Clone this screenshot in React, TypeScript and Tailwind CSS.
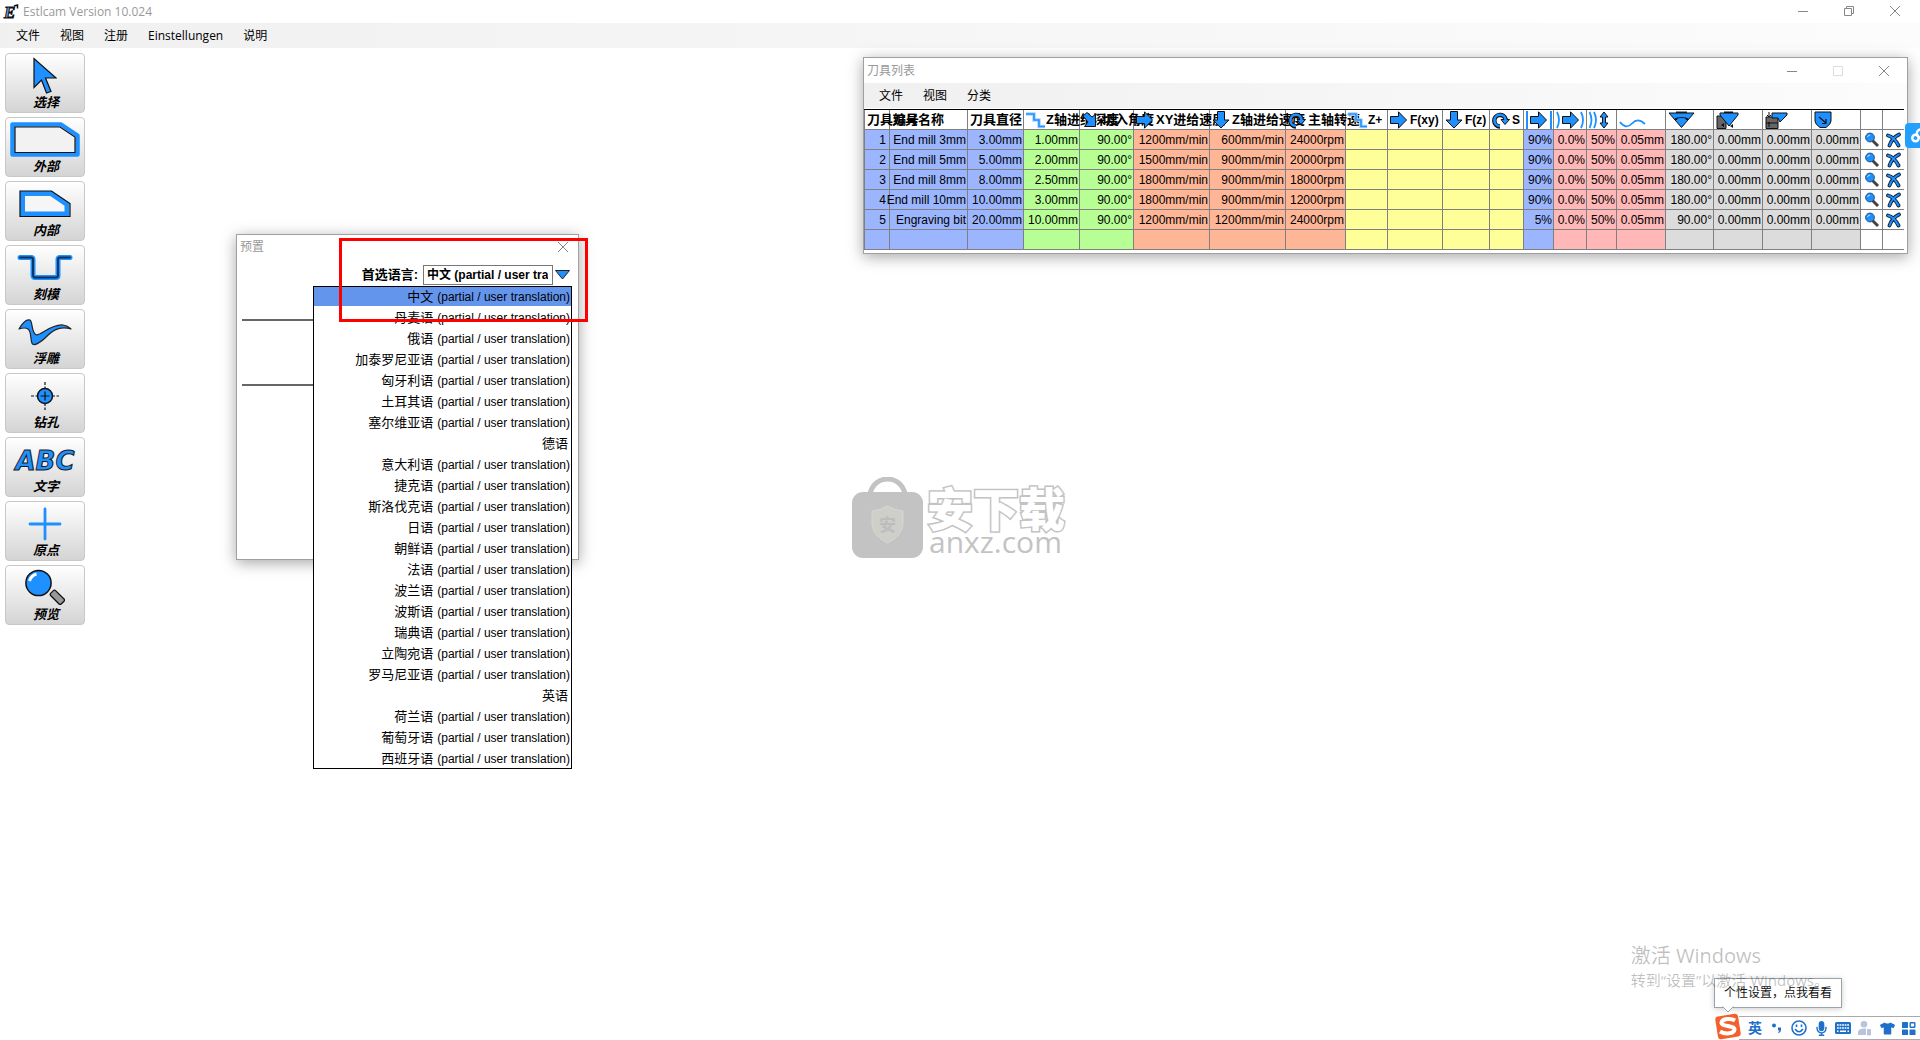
import React from "react";
import { FaMicrophone, FaTshirt } from "react-icons/fa";

const BLUE = "#1e90ff";

/* ---------- toolbar drawings ---------- */

const CursorIcon = () => (
  <svg width="24" height="38" viewBox="0 0 24 38" aria-hidden="true">
    <path d="M1 1.5V30.5L8.5 23L13.5 36L18 34.5L12.5 21H23Z" fill={BLUE} stroke="#111" strokeWidth="1.2" />
  </svg>
);

const OutsideIcon = () => (
  <svg width="70" height="36" viewBox="0 0 70 36" aria-hidden="true">
    <path d="M2.5 2.5H51L67.5 13.5V32.5H2.5Z" fill="none" stroke={BLUE} strokeWidth="4.5" strokeLinejoin="round" />
    <path d="M5 5H50L65 15V30.5H5Z" fill="#f2f2f2" stroke="#111" strokeWidth="1.2" />
  </svg>
);

const InsideIcon = () => (
  <svg width="52" height="28" viewBox="0 0 52 28" aria-hidden="true">
    <path d="M3.5 3.5H32L48 14.5V24H3.5Z" fill="#f6f6f6" stroke={BLUE} strokeWidth="5" />
    <path d="M1 1H32.5L51 13.5V26.5H1Z" fill="none" stroke="#111" strokeWidth="1.2" />
  </svg>
);

const EngraveIcon = () => (
  <svg width="56" height="28" viewBox="0 0 56 28" fill="none" aria-hidden="true">
    <path d="M3 3.5H14Q16 3.5 16 5.5V21Q16 23.5 18 23.5H39Q41 23.5 41 21.5V5.5Q41 3.5 43 3.5H53" stroke={BLUE} strokeWidth="5" strokeLinecap="round" />
    <path d="M3 3.5H14Q16 3.5 16 5.5V21Q16 23.5 18 23.5H39Q41 23.5 41 21.5V5.5Q41 3.5 43 3.5H53" stroke="#0d2f57" strokeWidth="1.8" strokeLinecap="round" />
  </svg>
);

const ReliefIcon = () => (
  <svg width="54" height="28" viewBox="0 0 54 28" aria-hidden="true">
    <path d="M1 11C5 4 9 1 12 2C15 4 13 15 18.500 17C24 17 33 6 45 7C49 7.5 51 9 53 11C40 7 33 14 26 21C21 25 17 28 14.500 26C12 23 14 14 10 11C7 9 4 10 1 11Z" fill={BLUE} stroke="#222" strokeWidth="1.2" strokeLinejoin="round" />
  </svg>
);

const DrillIcon = () => (
  <svg width="30" height="30" viewBox="0 0 30 30" aria-hidden="true">
    <circle cx="15" cy="15" r="7.5" fill={BLUE} stroke="#111" strokeWidth="1.5" />
    <path d="M15 10.5V19.5M10.5 15H19.5" stroke="#111" strokeWidth="1.2" />
    <path d="M1 15H4M5.5 15H7M23 15H25M26.5 15H29M15 1V4M15 5.5V7M15 23V25M15 26.5V29" stroke="#111" strokeWidth="1.2" />
  </svg>
);

const OriginIcon = () => (
  <svg width="34" height="34" viewBox="0 0 34 34" aria-hidden="true">
    <path d="M17 2V32M2 17H32" stroke={BLUE} strokeWidth="2.8" strokeLinecap="round" />
  </svg>
);

const PreviewIcon = () => (
  <svg width="40" height="38" viewBox="0 0 40 38" aria-hidden="true">
    <rect x="-3.5" y="0" width="7" height="15" rx="1.5" transform="translate(27 23) rotate(-45)" fill="#999" stroke="#111" strokeWidth="1.3" />
    <circle cx="13.5" cy="14" r="12.6" fill={BLUE} stroke="#111" strokeWidth="1.5" />
    <path d="M4.5 12C5.5 8.500 8 6 11.5 5" stroke="#fff" strokeWidth="3" fill="none" />
  </svg>
);

const TextIcon = () => (
  <span
    aria-hidden="true"
    className="pt-0.5 font-['DejaVu_Sans'] text-[26px] leading-none font-bold italic text-[#1e90ff] [-webkit-text-stroke:1px_#1a1a1a]"
  >
    ABC
  </span>
);

const tools: { label: string; icon: React.ReactNode }[] = [
  { label: "选择", icon: <CursorIcon /> },
  { label: "外部", icon: <OutsideIcon /> },
  { label: "内部", icon: <InsideIcon /> },
  { label: "刻模", icon: <EngraveIcon /> },
  { label: "浮雕", icon: <ReliefIcon /> },
  { label: "钻孔", icon: <DrillIcon /> },
  { label: "文字", icon: <TextIcon /> },
  { label: "原点", icon: <OriginIcon /> },
  { label: "预览", icon: <PreviewIcon /> },
];

/* ---------- tool table drawings ---------- */

const HIcon = ({ w = 20, children }: { w?: number; children: React.ReactNode }) => (
  <svg width={w} height="18" viewBox={`0 0 ${w} 18`} className="shrink-0" fill="none" aria-hidden="true">
    {children}
  </svg>
);

const arrowPath = "M0.5 5.5H8.5V0.8L16.5 9L8.5 17.2V12.5H0.5Z";

const Stairs = () => (
  <HIcon>
    <path d="M0 3H8V9H13V15.5H19" stroke="#a8d4ff" strokeWidth="3.5" />
    <path d="M0 3H8V9H13V15.5H19" stroke={BLUE} strokeWidth="1.6" />
  </HIcon>
);
const ArrowRight = () => (
  <HIcon>
    <path d={arrowPath} fill={BLUE} stroke="#111" />
  </HIcon>
);
const ArrowDown = () => (
  <HIcon>
    <path d="M5.5 0.5H12.5V9H17L9 17L1 9H5.5Z" fill={BLUE} stroke="#111" />
  </HIcon>
);
const ArrowDiagonal = () => (
  <HIcon>
    <path d="M1 5L5 1.5L10 6L13.5 3.5V15.5H2.5L6 11Z" fill={BLUE} stroke="#111" />
  </HIcon>
);
const Spindle = () => (
  <HIcon>
    <path d="M8 15.5A5.8 5.8 0 1 1 13.8 8.5" stroke="#111" strokeWidth="4.5" />
    <path d="M9 8.5H17.5L13 13.5Z" fill={BLUE} stroke="#111" />
    <path d="M8 15A5.6 5.6 0 1 1 13.6 9" stroke={BLUE} strokeWidth="2.6" />
  </HIcon>
);
const BarsArrow = () => (
  <HIcon w={27}>
    <path d="M1 0V18M25 0V18" stroke={BLUE} strokeWidth="2" />
    <path d={arrowPath} fill={BLUE} stroke="#111" transform="translate(4 0)" />
  </HIcon>
);
const CurvesArrow = () => (
  <HIcon w={29}>
    <path d="M1 1Q5 9 1 17M25 1Q29 9 25 17" stroke={BLUE} strokeWidth="1.8" />
    <path d={arrowPath} fill={BLUE} stroke="#111" transform="translate(6 0)" />
  </HIcon>
);
const CurvesUpDown = () => (
  <HIcon w={22}>
    <path d="M0.5 1Q4.5 9 0.5 17M5 1Q9 9 5 17" stroke={BLUE} strokeWidth="1.8" />
    <path d="M15 1L19 6H16.5V12H19L15 17L11 12H13.5V6H11Z" fill={BLUE} stroke="#111" />
  </HIcon>
);
const Wave = () => (
  <HIcon w={27}>
    <path d="M1 11Q7 19 13 12.5Q19 6 26 13" stroke={BLUE} strokeWidth="1.8" />
  </HIcon>
);
const TipAngle = () => (
  <HIcon w={27}>
    <path d="M8 0.5H19V3H8Z" fill="#222" />
    <path d="M1 2H26L13.5 16.5Z" fill={BLUE} stroke="#111" />
    <path d="M7 8Q13.5 5 20 8" stroke="#111" strokeWidth="1.2" />
    <path d="M6 9L10 6L9 9ZM21 9L17 6L18 9Z" fill="#111" />
  </HIcon>
);
const TipOffset = () => (
  <HIcon w={24}>
    <path d="M1 5H7L10 9V17.5H1Z" fill="#666" stroke="#111" />
    <path d="M4 2H22V4L13 15L4 4Z" fill={BLUE} stroke="#111" />
    <path d="M8 0.5H17V2H8ZM5 14L8 12V16ZM17 13L14 15L17 17Z" fill="#111" />
  </HIcon>
);
const TipDepth = () => (
  <HIcon w={24}>
    <path d="M1 6H13V17.5H1Z" fill="#666" stroke="#111" />
    <path d="M4 1V6M2 4L4 6L6 4" stroke="#111" />
    <path d="M7 2H22V4L15 11L13 7H7Z" fill={BLUE} stroke="#111" />
    <path d="M4 16V11M3 12L5 12M1 12H13" stroke="#111" />
  </HIcon>
);
const TipRadius = () => (
  <HIcon w={20}>
    <path d="M1 1H17V10Q17 13 12 16.5H6Q1 13 1 10Z" fill={BLUE} stroke="#111" />
    <path d="M5 6L12 12M12 8V12.5H8" stroke="#111" strokeWidth="1.2" />
  </HIcon>
);

const LensIcon = () => (
  <svg width="16" height="16" viewBox="0 0 16 16" aria-hidden="true">
    <path d="M8.5 8.5L14 14" stroke="#444" strokeWidth="3" />
    <circle cx="6" cy="5.5" r="4.4" fill={BLUE} stroke="#24507f" />
    <path d="M3.5 5Q4 3.3 6 3" stroke="#cfe6ff" fill="none" />
  </svg>
);
const CrossIcon = () => (
  <svg width="16" height="16" viewBox="0 0 16 16" fill="none" aria-hidden="true">
    <path d="M2 3.5Q8 5 12.5 13.5M13 2.5Q6 6 3.5 13.5" stroke="#123" strokeWidth="3.8" strokeLinecap="round" />
    <path d="M2 3.5Q8 5 12.5 13.5M13 2.5Q6 6 3.5 13.5" stroke={BLUE} strokeWidth="1.9" strokeLinecap="round" />
  </svg>
);

type Column = { width: string; fill: string; title?: string; small?: boolean; icon?: React.ReactNode; name: string };

const columns: Column[] = [
  { width: "w-[25px]", fill: "bg-[#9bb6ff]", title: "刀具编号", name: "刀具编号" },
  { width: "w-[78px]", fill: "bg-[#9bb6ff]", title: "刀具名称", name: "刀具名称" },
  { width: "w-[56px]", fill: "bg-[#9bb6ff]", title: "刀具直径", name: "刀具直径" },
  { width: "w-[56px]", fill: "bg-[#b7ff95]", title: "Z轴进给深度", icon: <Stairs />, name: "Z轴进给深度" },
  { width: "w-[54px]", fill: "bg-[#b7ff95]", title: "切入角度", icon: <ArrowDiagonal />, name: "切入角度" },
  { width: "w-[76px]", fill: "bg-[#ffb697]", title: "XY进给速度", icon: <ArrowRight />, name: "XY进给速度" },
  { width: "w-[76px]", fill: "bg-[#ffb697]", title: "Z轴进给速度", icon: <ArrowDown />, name: "Z轴进给速度" },
  { width: "w-[60px]", fill: "bg-[#ffb697]", title: "主轴转速", icon: <Spindle />, name: "主轴转速" },
  { width: "w-[42px]", fill: "bg-[#ffff99]", title: "Z+", small: true, icon: <Stairs />, name: "Z+" },
  { width: "w-[55px]", fill: "bg-[#ffff99]", title: "F(xy)", small: true, icon: <ArrowRight />, name: "F(xy)" },
  { width: "w-[47px]", fill: "bg-[#ffff99]", title: "F(z)", small: true, icon: <ArrowDown />, name: "F(z)" },
  { width: "w-[34px]", fill: "bg-[#ffff99]", title: "S", small: true, icon: <Spindle />, name: "S" },
  { width: "w-[30px]", fill: "bg-[#9bb6ff]", icon: <BarsArrow />, name: "stepover" },
  { width: "w-[33px]", fill: "bg-[#ffb7b7]", icon: <CurvesArrow />, name: "trochoidal step" },
  { width: "w-[30px]", fill: "bg-[#ffb7b7]", icon: <CurvesUpDown />, name: "trochoidal width" },
  { width: "w-[49px]", fill: "bg-[#ffb7b7]", icon: <Wave />, name: "oscillation" },
  { width: "w-[48px]", fill: "bg-[#dcdcdc]", icon: <TipAngle />, name: "tip angle" },
  { width: "w-[49px]", fill: "bg-[#dcdcdc]", icon: <TipOffset />, name: "tip diameter" },
  { width: "w-[49px]", fill: "bg-[#dcdcdc]", icon: <TipDepth />, name: "cutter height" },
  { width: "w-[49px]", fill: "bg-[#dcdcdc]", icon: <TipRadius />, name: "corner radius" },
  { width: "w-[22px]", fill: "bg-white", name: "preview" },
  { width: "w-[22px]", fill: "bg-white", name: "delete" },
];

const tail = ["0.0%", "50%", "0.05mm"];
const zeros = ["0.00mm", "0.00mm", "0.00mm"];
const blanks = ["", "", "", ""];
const rows: string[][] = [
  ["1", "End mill 3mm", "3.00mm", "1.00mm", "90.00°", "1200mm/min", "600mm/min", "24000rpm", ...blanks, "90%", ...tail, "180.00°", ...zeros],
  ["2", "End mill 5mm", "5.00mm", "2.00mm", "90.00°", "1500mm/min", "900mm/min", "20000rpm", ...blanks, "90%", ...tail, "180.00°", ...zeros],
  ["3", "End mill 8mm", "8.00mm", "2.50mm", "90.00°", "1800mm/min", "900mm/min", "18000rpm", ...blanks, "90%", ...tail, "180.00°", ...zeros],
  ["4", "End mill 10mm", "10.00mm", "3.00mm", "90.00°", "1800mm/min", "900mm/min", "12000rpm", ...blanks, "90%", ...tail, "180.00°", ...zeros],
  ["5", "Engraving bit", "20.00mm", "10.00mm", "90.00°", "1200mm/min", "1200mm/min", "24000rpm", ...blanks, "5%", ...tail, "90.00°", ...zeros],
];

/* ---------- shared window parts ---------- */

const uiFont = "font-['Open_Sans','Noto_Sans_CJK_SC',sans-serif]";

function MenuBar({ items, className }: { items: string[]; className: string }) {
  return (
    <nav className={`flex h-[25px] items-center gap-5 bg-linear-to-r from-[#f0f0f0] to-[#fcfcfc] text-xs text-black ${className}`}>
      {items.map((item) => (
        <button key={item} type="button" className="whitespace-nowrap">
          {item}
        </button>
      ))}
    </nav>
  );
}

const MinimizeGlyph = () => (
  <svg width="10" height="10" viewBox="0 0 10 10" aria-hidden="true">
    <path d="M0 5.5H10" stroke="#888" />
  </svg>
);
const RestoreGlyph = () => (
  <svg width="10" height="10" viewBox="0 0 10 10" fill="none" stroke="#888" aria-hidden="true">
    <path d="M0.5 2.5H7.5V9.5H0.5ZM2.5 2.5V0.5H9.5V7.5H7.5" />
  </svg>
);
const MaximizeGlyph = () => (
  <svg width="10" height="10" viewBox="0 0 10 10" fill="none" stroke="#ddd" aria-hidden="true">
    <path d="M0.5 0.5H9.5V9.5H0.5Z" />
  </svg>
);
const CloseGlyph = () => (
  <svg width="10" height="10" viewBox="0 0 10 10" stroke="#888" aria-hidden="true">
    <path d="M0 0L10 10M10 0L0 10" />
  </svg>
);

function CaptionButton({ label, children }: { label: string; children: React.ReactNode }) {
  return (
    <button type="button" aria-label={label} className="flex h-full w-[46px] items-center justify-center">
      {children}
    </button>
  );
}

/* ---------- tool list window ---------- */

function ToolListWindow() {
  return (
    <section
      aria-label="刀具列表"
      className={`absolute top-[57px] right-3 w-[1045px] border border-[#a0a0a0] bg-white pb-[3px] shadow-[0_3px_14px_rgba(0,0,0,0.35)] ${uiFont}`}
    >
      <header className="flex h-[25px] items-center justify-between pl-[3px]">
        <h2 className="text-xs text-[#999]">刀具列表</h2>
        <div className="flex h-full">
          <CaptionButton label="最小化"><MinimizeGlyph /></CaptionButton>
          <CaptionButton label="最大化"><MaximizeGlyph /></CaptionButton>
          <CaptionButton label="关闭"><CloseGlyph /></CaptionButton>
        </div>
      </header>
      <MenuBar items={["文件", "视图", "分类"]} className="pl-[15px]" />
      <div className="pt-px pr-[3px]">
        <table className="w-full table-fixed border-separate border-spacing-0 border-t border-black font-['Liberation_Sans','Noto_Sans_CJK_SC',sans-serif] text-xs text-black">
          <thead>
            <tr className="h-5">
              {columns.map((c) => (
                <th key={c.name} scope="col" aria-label={c.name} className={`border-b border-l border-[#808080] p-0 ${c.width}`}>
                  <div className="flex h-[19px] items-center pl-0.5">
                    {c.icon}
                    {c.title && (
                      <span className={`leading-none whitespace-nowrap ${c.small ? "text-xs" : "text-[13px]"}`}>{c.title}</span>
                    )}
                  </div>
                </th>
              ))}
            </tr>
          </thead>
          <tbody>
            {rows.map((row) => (
              <tr key={row[0]} className="h-5">
                {row.map((value, i) => (
                  <td key={i} className={`border-b border-l border-[#808080] p-0 ${columns[i].fill}`}>
                    <div className={`flex h-[19px] items-center justify-end whitespace-nowrap ${i === 0 ? "pr-[3px]" : "pr-px"}`}>{value}</div>
                  </td>
                ))}
                <td className="border-b border-l border-[#808080] p-0">
                  <button type="button" aria-label={`预览 ${row[1]}`} className="flex h-[19px] w-full items-center justify-center">
                    <LensIcon />
                  </button>
                </td>
                <td className="border-b border-l border-[#808080] p-0">
                  <button type="button" aria-label={`删除 ${row[1]}`} className="flex h-[19px] w-full items-center justify-center">
                    <CrossIcon />
                  </button>
                </td>
              </tr>
            ))}
            <tr className="h-5">
              {columns.map((c) => (
                <td key={c.name} className={`border-b border-l border-[#808080] p-0 ${c.fill}`} />
              ))}
            </tr>
          </tbody>
        </table>
      </div>
    </section>
  );
}

/* ---------- preset dialog ---------- */

const languages: [string, boolean][] = [
  ["中文", true],
  ["丹麦语", true],
  ["俄语", true],
  ["加泰罗尼亚语", true],
  ["匈牙利语", true],
  ["土耳其语", true],
  ["塞尔维亚语", true],
  ["德语", false],
  ["意大利语", true],
  ["捷克语", true],
  ["斯洛伐克语", true],
  ["日语", true],
  ["朝鲜语", true],
  ["法语", true],
  ["波兰语", true],
  ["波斯语", true],
  ["瑞典语", true],
  ["立陶宛语", true],
  ["罗马尼亚语", true],
  ["英语", false],
  ["荷兰语", true],
  ["葡萄牙语", true],
  ["西班牙语", true],
];

function PresetDialog() {
  return (
    <section
      aria-label="预置"
      className="absolute top-[234px] left-[236px] h-[326px] w-[343px] border border-[#a0a0a0] bg-white shadow-[0_3px_14px_rgba(0,0,0,0.35)]"
    >
      <header className={`flex h-6 items-center justify-between pr-[10px] pl-[3px] ${uiFont}`}>
        <h2 className="text-xs text-[#999]">预置</h2>
        <button type="button" aria-label="关闭" className="flex items-center">
          <CloseGlyph />
        </button>
      </header>
      <div className="mt-1.5 flex h-5 items-center justify-end gap-[5px] pr-2 font-['Liberation_Sans','Noto_Sans_CJK_SC',sans-serif] font-bold text-black">
        <label htmlFor="language" className="text-[13px] leading-5">
          首选语言:
        </label>
        <div className="flex items-center gap-0.5">
          <select
            id="language"
            defaultValue="中文"
            className="h-5 w-[130px] appearance-none overflow-hidden border border-[#777] bg-white pr-1 pl-[3px] text-xs leading-4"
          >
            {languages.map(([name, partial]) => (
              <option key={name} value={name}>
                {partial ? `${name} (partial / user translation)` : name}
              </option>
            ))}
          </select>
          <svg width="15" height="10" viewBox="0 0 15 10" aria-hidden="true">
            <path d="M0.5 0.5H14.5L7.5 9Z" fill={BLUE} stroke="#222" />
          </svg>
        </div>
      </div>
      <hr className="mr-2 ml-[5px] mt-[34px] border-t-2 border-[#666]" />
      <hr className="mr-2 ml-[5px] mt-[63px] border-t-2 border-[#666]" />

      <ul
        role="listbox"
        aria-label="首选语言"
        className="absolute top-[51px] right-1.5 flex w-[259px] flex-col gap-0.5 border border-black bg-white font-['Liberation_Sans','Noto_Sans_CJK_SC',sans-serif] text-xs text-black"
      >
        {languages.map(([name, partial], i) => (
          <li
            key={name}
            role="option"
            aria-selected={i === 0}
            className={`flex h-[19px] items-center justify-end gap-1 whitespace-nowrap ${i === 0 ? "bg-[#6495ed]" : ""} ${partial ? "pr-px" : "pr-[3px]"}`}
          >
            <span className="text-[13px] leading-none">{name}</span>
            {partial && <span>(partial / user translation)</span>}
          </li>
        ))}
      </ul>
      <div className="pointer-events-none absolute top-[3px] left-[102px] h-[84px] w-[249px] border-[3px] border-[#ff0000]" />
    </section>
  );
}

/* ---------- overlays ---------- */

function SiteWatermark() {
  return (
    <div className={`pointer-events-none absolute top-[477px] left-[852px] flex items-end gap-1 text-[#c3c3c3] ${uiFont}`}>
      <svg width="71" height="81" viewBox="0 0 71 81" aria-hidden="true">
        <path d="M18 17C22 -3 49 -3 53 17" fill="none" stroke="#c3c3c3" strokeWidth="5" />
        <rect x="0" y="15" width="71" height="66" rx="11" fill="#c3c3c3" />
        <path d="M20 34Q29 33 35.5 29Q42 33 51 34V48Q50 59 35.5 66Q21 59 20 48Z" fill="#cfcfca" stroke="#d6d6d6" />
        <text x="35.5" y="54" textAnchor="middle" fontSize="17" fontWeight="700" fill="#bdbdbd" fontFamily="Noto Sans CJK SC">
          安
        </text>
      </svg>
      <div className="flex flex-col pb-1">
        <span className="text-[46px] leading-[44px] font-black text-white [-webkit-text-stroke:3px_#c3c3c3] [paint-order:stroke]">安下载</span>
        <span className="pl-0.5 text-[30px] leading-6">anxz.com</span>
      </div>
    </div>
  );
}

function ActivationNotice() {
  return (
    <div className={`pointer-events-none absolute right-[91px] bottom-[50px] text-black/25 ${uiFont}`}>
      <p className="text-xl leading-7">激活 Windows</p>
      <p className="text-[15px] leading-5">转到“设置”以激活 Windows。</p>
    </div>
  );
}

function ImeBar() {
  const cell = "flex w-[22px] items-center justify-center";
  return (
    <div className={`absolute right-0 bottom-0 flex items-end ${uiFont}`}>
      <div className="relative -mr-[3px]">
        <div
          role="tooltip"
          className="absolute bottom-8 left-0 flex h-[30px] w-32 items-center justify-center border border-[#9aa3aa] bg-white text-xs whitespace-nowrap text-[#111] shadow-[0_1px_6px_rgba(0,0,0,0.2)]"
        >
          个性设置，点我看看
          <svg width="12" height="7" viewBox="0 0 12 7" className="absolute top-[27px] left-[7px]" aria-hidden="true">
            <path d="M0.5 0.5L6 6L11.5 0.5" fill="#fff" stroke="#9aa3aa" />
          </svg>
        </div>
        <button type="button" aria-label="搜狗输入法" className="relative z-10 block">
          <svg width="28" height="27" viewBox="0 0 28 27" aria-hidden="true">
            <rect x="2.5" y="2" width="23" height="23" rx="3" fill="#f4602c" transform="rotate(-9 14 13.5)" />
            <path d="M21 7.5C17 5 8.5 5.5 7.5 9.5C7 14 20.5 12 20.5 16.5C20 21 11 21.5 6 18.5" fill="none" stroke="#fff" strokeWidth="4" />
          </svg>
        </button>
      </div>
      <div className="flex h-6 items-stretch border-y border-[#aaa] bg-white pl-[5px] text-[#1e70c8]">
        <button type="button" className={`${cell} text-sm font-bold`}>英</button>
        <button type="button" aria-label="标点" className={cell}>
          <svg width="12" height="12" viewBox="0 0 12 12" fill="currentColor" aria-hidden="true">
            <circle cx="3" cy="3.5" r="2" />
            <path d="M7 5.5H10V8Q10 10.5 7.5 11L7 10Q8.5 9.5 8.5 8.5H7Z" />
          </svg>
        </button>
        <button type="button" aria-label="表情" className={cell}>
          <svg width="16" height="16" viewBox="0 0 16 16" fill="none" stroke="currentColor" strokeWidth="1.6" aria-hidden="true">
            <circle cx="8" cy="8" r="7" />
            <path d="M4 9Q8 14.5 12 9M5.5 4.5V7M10.5 4.5V7" />
          </svg>
        </button>
        <button type="button" aria-label="语音" className={cell}><FaMicrophone size={15} /></button>
        <button type="button" aria-label="键盘" className={cell}>
          <svg width="16" height="12" viewBox="0 0 16 12" aria-hidden="true">
            <rect x="0" y="0" width="16" height="12" rx="1.5" fill="currentColor" />
            <path d="M2 3H14M2 6H14" stroke="#fff" strokeWidth="1.6" strokeDasharray="1.8 0.75" />
            <path d="M2 9.2H3.5M5 9.2H11M12.5 9.2H14" stroke="#fff" strokeWidth="1.5" />
          </svg>
        </button>
        <button type="button" aria-label="账户" className={cell}>
          <svg width="14" height="15" viewBox="0 0 14 15" fill="#b9c3dc" aria-hidden="true">
            <circle cx="6" cy="3.3" r="3.3" />
            <path d="M0 14V10.5Q1 7.5 6 7.5H8V14Z" />
            <rect x="9" y="8" width="4" height="6.5" rx="1" />
          </svg>
        </button>
        <button type="button" aria-label="皮肤" className={cell}><FaTshirt size={15} /></button>
        <button type="button" aria-label="工具箱" className={cell}>
          <svg width="14" height="13" viewBox="0 0 14 13" fill="currentColor" aria-hidden="true">
            <rect x="0" y="0" width="6" height="6" rx="0.5" />
            <rect x="8.2" y="0.7" width="4.6" height="4.6" rx="0.5" fill="none" stroke="currentColor" strokeWidth="1.4" />
            <rect x="0" y="7.5" width="6" height="5.5" rx="0.5" />
            <rect x="7.5" y="7.5" width="6" height="5.5" rx="0.5" />
          </svg>
        </button>
      </div>
    </div>
  );
}

export default function App() {
  return (
    <div className="relative min-h-screen overflow-hidden bg-white">
      <div className={uiFont}>
        <header className="flex h-[23px] items-center justify-between pr-0.5 pl-0.5">
          <div className="flex items-center gap-0.5">
            <svg width="19" height="18" viewBox="0 0 19 18" aria-hidden="true">
              <text x="2" y="15" fontSize="17" fontWeight="700" fontStyle="italic" fontFamily="Liberation Serif" fill="#6f9bf0" stroke="#111" strokeWidth="1">
                E
              </text>
              <path d="M12 3L15.5 2V5.5" fill="none" stroke="#111" strokeWidth="1.5" />
            </svg>
            <h1 className="text-xs text-[#999]">Estlcam Version 10.024</h1>
          </div>
          <div className="flex h-full pb-0.5">
            <CaptionButton label="最小化"><MinimizeGlyph /></CaptionButton>
            <CaptionButton label="还原"><RestoreGlyph /></CaptionButton>
            <CaptionButton label="关闭"><CloseGlyph /></CaptionButton>
          </div>
        </header>
        <MenuBar items={["文件", "视图", "注册", "Einstellungen", "说明"]} className="pl-4" />
      </div>

      <aside className="flex w-[90px] flex-col gap-1 px-[5px] pt-[5px]">
        {tools.map((t) => (
          <button
            key={t.label}
            type="button"
            className="flex h-[60px] flex-col items-center rounded-sm border border-[#c8c8c8] bg-linear-to-b from-white to-[#d4d4d4] pt-1 pb-0.5"
          >
            <span className="flex h-9 items-center justify-center">{t.icon}</span>
            <span className="pl-0.5 font-['Noto_Sans_CJK_SC',sans-serif] text-[13px] leading-4 font-bold text-black italic">{t.label}</span>
          </button>
        ))}
      </aside>

      <SiteWatermark />
      <PresetDialog />
      <ToolListWindow />

      <button
        type="button"
        aria-label="网盘"
        className="absolute top-[123px] right-0 flex h-[25px] w-[15px] items-center overflow-hidden rounded-l-sm bg-[#22a0ff] pl-1.5"
      >
        <svg width="22" height="16" viewBox="0 0 22 16" fill="none" stroke="#fff" strokeWidth="2.5" className="shrink-0" aria-hidden="true">
          <circle cx="4.5" cy="10" r="3.2" />
          <circle cx="10" cy="5.5" r="4.2" />
          <circle cx="14" cy="10" r="3.2" />
        </svg>
      </button>

      <ImeBar />
      <ActivationNotice />
    </div>
  );
}
